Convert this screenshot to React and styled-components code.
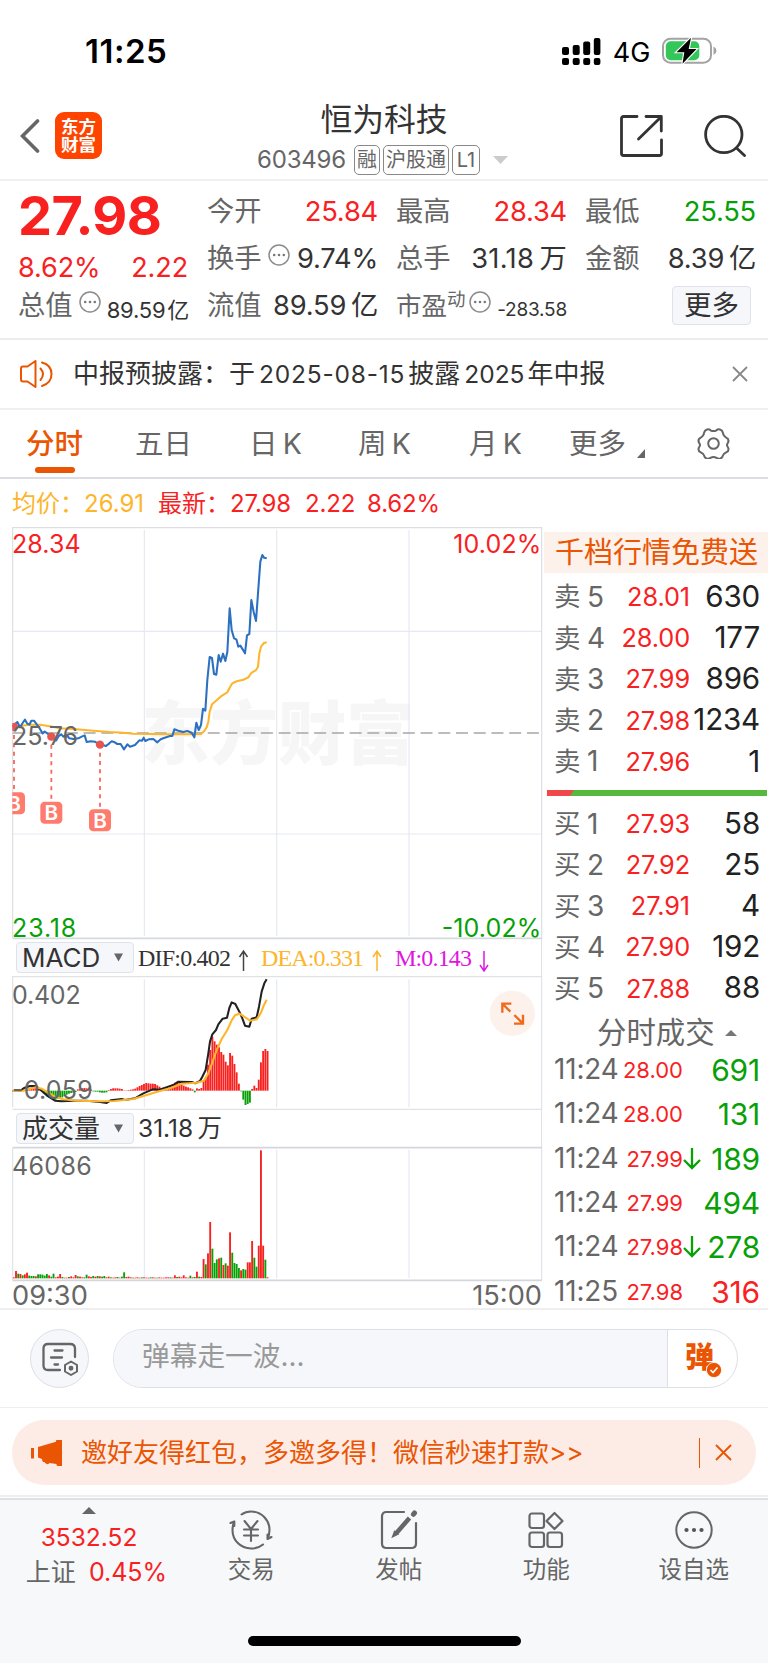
import React from 'react';
import styled, { createGlobalStyle } from 'styled-components';

const RED = '#f8211f';
const GREEN = '#07a007';
const ORANGE = '#ea5504';
const YELLOW = '#fdb52b';

const sells = [
  ['5', '28.01', '630'],
  ['4', '28.00', '177'],
  ['3', '27.99', '896'],
  ['2', '27.98', '1234'],
  ['1', '27.96', '1'],
];

const buys = [
  ['1', '27.93', '58'],
  ['2', '27.92', '25'],
  ['3', '27.91', '4'],
  ['4', '27.90', '192'],
  ['5', '27.88', '88'],
];

const trades = [
  { time: '11:24', price: '28.00', count: '691' },
  { time: '11:24', price: '28.00', count: '131' },
  { time: '11:24', price: '27.99', count: '189', down: true },
  { time: '11:24', price: '27.99', count: '494' },
  { time: '11:24', price: '27.98', count: '278', down: true },
  { time: '11:25', price: '27.98', count: '316', buy: true },
];

// one entry per minute, negative values are drawn in green
const macdBars = [
  1, 1, 1, 1, 2, 3, 5, 8, 10, 12, 10, 8, 5, -3, -9, -15, -20, -24, -27, -27, -24, -24, -20, -16, -12, -9, -7, -6,
  -4, 4, 6, 7, 8, 7, 5, 3, -2, -3, -3, -5, -6, -6, -5, 2, 5, 7, 7, 7, 6, 5, 1, 1, 2, 3, 4, 6, 10, 14, 17, 20, 23,
  22, 21, 21, 20, 16, 12, 8, 6, 6, 8, 14, 20, 24, 26, 24, 20, 15, 12, 10, 7, 4, -5, 7, 5, 8, 30, 40, 78, 122, 162,
  148, 138, 130, 116, 108, 87, 76, 113, 105, 80, 55, 21, -2, -27, -43, -40, -36, 5, 15, 8, 33, 85, 119, 125, 119,
];

// volume always grows upwards, the sign only picks the colour
const volumeBars = [
  3, 22, -14, 13, -9, 12, 17, -8, -7, -7, 6, -12, -12, -11, -8, -13, 9, -5, -14, 3, 5, 13, -4, 2, 2, -4, 6, 3, 10,
  -6, 5, 3, -3, -11, 6, 4, -7, 5, -7, 6, -5, -7, 3, 5, -3, 2, 3, -4, 2, -5, -18, 4, 5, 3, -2, 2, 3, 2, -3, 3, 2, 2,
  -3, 3, 2, -2, 3, 2, 2, 3, 3, -3, 2, 9, -4, 5, 3, 9, 3, 2, -8, 3, -4, 20, -5, 4, 58, -42, 75, 169, -89, -46, -57,
  60, -62, 40, -45, 38, 138, -77, -46, -43, -31, 24, -28, -26, 48, 48, 112, -62, -35, 98, 384, 98, -56, 3,
];

const priceLine =
  '38,620 45,612 52,606 60,622 68,609 75,599 82,611 88,614 94,602 102,602 108,610 118,624 128,640 134,635 142,640 150,648 160,655 168,662 176,648 184,643 190,650 200,645 208,655 220,657 235,655 245,650 254,646 260,666 272,664 285,665 295,672 308,675 318,678 328,670 335,664 344,667 352,672 362,672 372,688 382,673 390,680 405,675 418,661 426,662 431,653 436,663 446,658 460,657 472,667 482,658 492,654 510,648 517,648 523,628 535,632 550,636 562,633 575,638 583,652 589,608 596,630 603,615 609,566 616,572 622,480 629,411 636,414 642,462 649,464 656,405 662,425 669,401 676,423 682,396 689,265 695,330 702,355 709,358 715,380 721,377 728,388 735,400 741,346 748,342 754,240 761,276 768,303 774,220 781,125 787,105 792,113 800,115';

const avgLine =
  '38,624 60,618 90,614 120,614 150,619 180,625 230,628 280,632 330,636 370,638 400,641 450,642 500,643 560,643 603,642 612,634 620,622 625,605 629,575 636,553 650,541 664,528 682,517 689,503 697,490 710,484 730,479 745,472 754,459 768,450 774,440 778,400 783,380 792,369 800,367';

const difLine =
  '38,483 62,482 72,474 90,468 108,468 122,480 140,496 165,512 185,514 220,512 260,512 300,516 320,519 332,511 365,507 375,510 405,505 430,490 458,478 478,479 500,472 520,465 535,455 575,456 585,460 600,453 607,440 617,420 625,370 630,335 637,313 648,300 655,283 668,266 681,263 688,234 695,217 706,222 718,245 727,265 735,287 748,290 755,266 770,262 777,230 785,185 793,160 800,148';

const deaLine =
  '38,483 70,482 90,476 108,472 125,476 145,488 165,500 190,508 230,512 300,514 345,513 400,507 440,495 480,483 510,475 545,461 590,458 612,452 625,430 636,400 650,360 665,327 682,300 695,271 705,256 718,251 730,258 750,272 770,268 782,250 792,225 800,209';

const Bars = ({ data, base, upward }) =>
  data.map((v, i) => (
    <rect
      key={i}
      x={38.6 + i * 6.62}
      y={v > 0 || upward ? base - Math.abs(v) : base}
      width={5.6}
      height={Math.abs(v)}
      fill={v > 0 ? RED : GREEN}
    />
  ));

const Dots = () => (
  <DotsIcon viewBox="0 0 22 22">
    <circle cx="11" cy="11" r="10" fill="none" stroke="#8c8c8c" strokeWidth="1.500" />
    <circle cx="6.200" cy="11" r="1.300" fill="#777" />
    <circle cx="11" cy="11" r="1.300" fill="#777" />
    <circle cx="15.800" cy="11" r="1.300" fill="#777" />
  </DotsIcon>
);

const StatusBar = () => (
  <StyledStatus>
    <Clock>11:25</Clock>
    <StatusIcons>
      <svg width="39" height="27" viewBox="0 0 39 27">
        <rect x="0" y="9" width="7" height="8" rx="2" />
        <rect x="10.7" y="7" width="7" height="10" rx="2" />
        <rect x="21.2" y="3.5" width="7" height="13.5" rx="2" />
        <rect x="31.8" y="0" width="6.6" height="17" rx="2" />
        <rect x="0" y="20" width="7" height="7" rx="2" />
        <rect x="10.7" y="20" width="7" height="7" rx="2" />
        <rect x="21.2" y="20" width="7" height="7" rx="2" />
        <rect x="31.8" y="20" width="6.6" height="7" rx="2" />
      </svg>
      <Network>4G</Network>
      <svg width="55" height="28" viewBox="0 0 55 28">
        <rect x="1" y="1.7" width="48" height="24" rx="7.5" fill="none" stroke="#a3a3a3" strokeWidth="2" />
        <path d="M51.500 9.500q3 1.500 3 4.200t-3 4.200z" fill="#a3a3a3" />
        <rect x="3.800" y="4.300" width="33.500" height="19" rx="5" fill="#33c759" />
        <path d="M29 .8L14.500 15.200h7.800L20.500 26.800 34.500 12h-7.800z" fill="#000" stroke="#fff" strokeWidth="2.200" paintOrder="stroke" />
      </svg>
    </StatusIcons>
  </StyledStatus>
);

const Header = () => (
  <StyledHeader>
    <HeaderSide>
      <svg width="20" height="34" viewBox="0 0 20 34" fill="none" stroke="#666" strokeWidth="3.600" strokeLinecap="round">
        <path d="M17.500 2L2.500 17l15 15" />
      </svg>
      <Logo>
        <span>东方</span>
        <span>财富</span>
      </Logo>
    </HeaderSide>
    <HeaderTitle>
      <h1>恒为科技</h1>
      <div>
        <Code>603496</Code>
        <Tag $w={26}>融</Tag>
        <Tag $w={66}>沪股通</Tag>
        <Tag $w={28}>L1</Tag>
        <svg width="15" height="8" viewBox="0 0 15 8">
          <path d="M0 0h15L7.500 8z" fill="#ccc" />
        </svg>
      </div>
    </HeaderTitle>
    <HeaderActions>
      <svg width="43" height="42" viewBox="0 0 43 42" fill="none" stroke="#333" strokeWidth="2.800" strokeLinecap="round" strokeLinejoin="round">
        <path d="M17 1.500H3.500a2 2 0 00-2 2v35a2 2 0 002 2h36a2 2 0 002-2V25" />
        <path d="M26 1.500h15.300V16M41 2L18.500 24" />
      </svg>
      <svg width="43" height="42" viewBox="0 0 43 42" fill="none" stroke="#333" strokeWidth="2.800" strokeLinecap="round">
        <circle cx="19.800" cy="19.500" r="18.200" />
        <path d="M32.500 33l8 7.500" />
      </svg>
    </HeaderActions>
  </StyledHeader>
);

const Quote = () => (
  <StyledQuote>
    <QuoteMain>
      <BigPrice>27.98</BigPrice>
      <ChangeRow>
        <span>8.62%</span>
        <span>2.22</span>
      </ChangeRow>
      <QuoteCell>
        <label>总值</label>
        <Dots />
        <Value $small>89.59&#8202;亿</Value>
      </QuoteCell>
    </QuoteMain>
    <QuoteColumn>
      <QuoteCell>
        <label>今开</label>
        <Value $color={RED}>25.84</Value>
      </QuoteCell>
      <QuoteCell>
        <label>换手</label>
        <Dots />
        <Value>9.74%</Value>
      </QuoteCell>
      <QuoteCell>
        <label>流值</label>
        <Value>89.59&#8201;亿</Value>
      </QuoteCell>
    </QuoteColumn>
    <QuoteColumn>
      <QuoteCell>
        <label>最高</label>
        <Value $color={RED}>28.34</Value>
      </QuoteCell>
      <QuoteCell>
        <label>总手</label>
        <Value $spread={0.3}>31.18&#8201;万</Value>
      </QuoteCell>
      <QuoteCell $tight>
        <label>市盈</label>
        <sup>动</sup>
        <Dots />
        <Value $tiny>-283.58</Value>
      </QuoteCell>
    </QuoteColumn>
    <QuoteColumn>
      <QuoteCell>
        <label>最低</label>
        <Value $color={GREEN}>25.55</Value>
      </QuoteCell>
      <QuoteCell>
        <label>金额</label>
        <Value>8.39&#8201;亿</Value>
      </QuoteCell>
      <QuoteCell>
        <MoreButton>更多</MoreButton>
      </QuoteCell>
    </QuoteColumn>
  </StyledQuote>
);

const Notice = () => (
  <StyledNotice>
    <svg width="33" height="28" viewBox="0 0 33 28" fill="none" stroke={ORANGE} strokeWidth="2" strokeLinejoin="round" strokeLinecap="round">
      <path d="M1 8.500q0-2 2-2h4.500L15.500 1v26L7.500 21.500H3q-2 0-2-2z" />
      <path d="M20.500 8.500q5 5.500 0 11.500M22 2.500q9.500 2.500 9.500 11.500T22 26" />
    </svg>
    <p>
      中报预披露：于<Num $spread={0.8}>2025-08-15</Num>披露<Num>2025</Num>年中报
    </p>
    <svg width="16" height="16" viewBox="0 0 16 16" stroke="#888" strokeWidth="1.800">
      <path d="M1 1l14 14M15 1L1 15" />
    </svg>
  </StyledNotice>
);

const Tabs = () => (
  <StyledTabs>
    <Tab $w={58} $active>分时</Tab>
    <Tab $w={57} $gap={51}>五日</Tab>
    <Tab $w={51} $gap={57}>日&#8201;K</Tab>
    <Tab $w={51} $gap={58}>周&#8201;K</Tab>
    <Tab $w={51} $gap={60}>月&#8201;K</Tab>
    <Tab $w={76} $gap={49}>
      更多
      <svg width="8" height="9" viewBox="0 0 8 9">
        <path d="M8 0v9H0z" fill="#666" />
      </svg>
    </Tab>
    <svg width="33" height="31" viewBox="0 0 33 31" fill="none" stroke="#666" strokeWidth="2" strokeLinejoin="round">
      <path d="M10 1.500q2-.8 3.500.8 3 1.600 6 0 1.500-1.600 3.500-.8 2.500.8 3 3.500.3 3 3.200 4.600 2.500 1 2.300 3.400-.2 1.500-1 2.500-1 1.500 0 3 .8 1 1 2.500.2 2.400-2.300 3.400-2.900 1.600-3.200 3-.5 2.500-3 3.200-2 .8-3.500-.8-3-1.600-6 0-1.500 1.600-3.500.8-2.500-.7-3-3.200-.3-1.400-3.200-3-2.500-1-2.300-3.400.2-1.500 1-2.500 1-1.500 0-3-.8-1-1-2.500-.2-2.400 2.300-3.400Q6.700 8 7 5q.5-2.700 3-3.500z" />
      <circle cx="16.500" cy="15.500" r="5.300" />
    </svg>
  </StyledTabs>
);

const Marker = ({ x, y, badge }) => (
  <g>
    <circle cx={x} cy={y} r="12.500" fill="#e8554f" />
    <path d={`M${x} ${y + 24}V${badge - 4}`} stroke="#f8685e" strokeWidth="5.500" strokeDasharray="12 13" />
    <rect x={x - 33} y={badge} width="66" height="66" rx="13" fill="#ff7b6e" />
    <text x={x} y={badge + 55} fontSize="62" fontWeight="600" fill="#fff" textAnchor="middle">B</text>
  </g>
);

const PriceChart = () => (
  <ChartSvg viewBox="0 21 1626 1236" $h={412}>
    <defs>
      <clipPath id="plot">
        <rect x="37" y="0" width="1590" height="1300" />
      </clipPath>
    </defs>
    <g fontSize="208" fontWeight="900" fill="#f6f6f6">
      <text x="424" y="718" textLength="820" lengthAdjust="spacingAndGlyphs">东方财富</text>
    </g>
    <g stroke="#e6e9f1" strokeWidth="3.500" fill="none">
      <path d="M433 30V1248M830 30V1248M1227 30V1248M38 334H1625M38 942H1625" />
      <path d="M38 1255V23H1625V1257" stroke="#dcdee2" />
      <path d="M38 1255H1625" stroke="#d6d9de" strokeWidth="5" />
    </g>
    <path d="M38 639H1620" stroke="#a6a6a6" strokeWidth="5" strokeDasharray="36 17.200" />
    <polyline points={avgLine} fill="none" stroke={YELLOW} strokeWidth="6.200" />
    <polyline points={priceLine} fill="none" stroke="#2c70c0" strokeWidth="6.200" strokeLinejoin="round" />
    <g clipPath="url(#plot)">
      <Marker x={42} y={621} badge={817} />
      <Marker x={154} y={650} badge={845} />
      <Marker x={300} y={674} badge={868} />
    </g>
    <g fontSize="75">
      <text x="36" y="98" fill={RED} textLength="206">28.34</text>
      <text x="1360" y="98" fill={RED} textLength="264">10.02%</text>
      <text x="36" y="674" fill="#666" textLength="198">25.76</text>
      <text x="36" y="1250" fill={GREEN} textLength="193">23.18</text>
      <text x="1325" y="1250" fill={GREEN} textLength="299">-10.02%</text>
    </g>
  </ChartSvg>
);

const MacdChart = () => (
  <ChartSvg viewBox="0 138 1626 402" $h={134}>
    <g stroke="#e6e9f1" strokeWidth="3.500" fill="none">
      <path d="M433 148V532M830 148V532M1227 148V532" />
      <path d="M38 532V140H1625V540M38 538H1625" stroke="#e0e2e6" />
    </g>
    <Bars data={macdBars} base={482} />
    <polyline points={difLine} fill="none" stroke="#222" strokeWidth="6.200" strokeLinejoin="round" />
    <polyline points={deaLine} fill="none" stroke={YELLOW} strokeWidth="6.200" strokeLinejoin="round" />
    <g fontSize="75" fill="#666">
      <text x="36" y="223" textLength="206">0.402</text>
      <text x="36" y="506" textLength="242">-0.059</text>
    </g>
    <circle cx="1537" cy="250" r="68" fill="#fdf1eb" />
    <path d="M1531 245l-24-24M1507 248v-27h27M1543 255l26 26M1569 254v27h-27" stroke="#f06a1e" strokeWidth="7" fill="none" />
  </ChartSvg>
);

const VolumeChart = () => (
  <ChartSvg viewBox="0 651 1626 402" $h={134}>
    <g stroke="#e6e9f1" strokeWidth="3.500" fill="none">
      <path d="M433 660V1044M830 660V1044M1227 660V1044" />
      <path d="M38 1051V653M1625 651V1053" stroke="#e0e2e6" />
      <path d="M38 653H1625M38 1051H1625" stroke="#d4d6db" strokeWidth="5" />
    </g>
    <Bars data={volumeBars} base={1045} upward />
    <text x="36" y="736" fontSize="75" fill="#666" textLength="239">46086</text>
  </ChartSvg>
);

const Caret = () => (
  <svg width="9" height="9" viewBox="0 0 9 9">
    <path d="M0 .5h9l-4.500 8z" fill="#666" />
  </svg>
);

const Charts = () => (
  <ChartColumn>
    <PriceChart />
    <IndicatorRow>
      <Select>
        MACD
        <Caret />
      </Select>
      <MacdValues>
        <svg width="352" height="30" viewBox="0 0 352 30" fontSize="24">
          <text x="0" y="22.500" fill="#333" textLength="93">DIF:0.402</text>
          <path d="M105.500 28V9M101.500 14l4-6 4 6" stroke="#444" fill="none" strokeWidth="1.500" />
          <text x="123" y="22.500" fill={YELLOW} textLength="103">DEA:0.331</text>
          <path d="M239 28V9M235 14l4-6 4 6" stroke={YELLOW} fill="none" strokeWidth="1.500" />
          <text x="257" y="22.500" fill="#e016e0" textLength="77">M:0.143</text>
          <path d="M346 8v19M342 22l4 6 4-6" stroke="#e016e0" fill="none" strokeWidth="1.500" />
        </svg>
      </MacdValues>
    </IndicatorRow>
    <MacdChart />
    <IndicatorRow>
      <Select>
        成交量
        <Caret />
      </Select>
      <VolumeValue>31.18&#8201;万</VolumeValue>
    </IndicatorRow>
    <VolumeChart />
    <TimeAxis>
      <span>09:30</span>
      <span>15:00</span>
    </TimeAxis>
  </ChartColumn>
);

const OrderRow = ({ side, row }) => (
  <StyledOrder>
    <b>{side}</b>
    <i>{row[0]}</i>
    <OrderPrice>{row[1]}</OrderPrice>
    <OrderCount>{row[2]}</OrderCount>
  </StyledOrder>
);

const OrderBook = () => (
  <BookColumn>
    <Banner>千档行情免费送</Banner>
    {sells.map((row) => (
      <OrderRow key={row[0]} side="卖" row={row} />
    ))}
    <Ratio width="220" height="6" viewBox="0 0 220 6">
      <path d="M0 0h220v6H0z" fill="#56b83c" />
      <path d="M0 0h27l-4 6H0z" fill="#f04848" />
    </Ratio>
    {buys.map((row) => (
      <OrderRow key={row[0]} side="买" row={row} />
    ))}
    <TradeTitle>
      分时成交
      <svg width="12" height="6" viewBox="0 0 12 6">
        <path d="M6 0l6 6H0z" fill="#777" />
      </svg>
    </TradeTitle>
    {trades.map((t, i) => (
      <Trade key={i}>
        <TradeTime>{t.time}</TradeTime>
        <TradePrice>{t.price}</TradePrice>
        <TradeArrow>
          {t.down && (
            <svg width="18" height="22" viewBox="0 0 18 22" fill="none" stroke={GREEN} strokeWidth="2.300">
              <path d="M9 0v20M1 12l8 8 8-8" />
            </svg>
          )}
        </TradeArrow>
        <TradeCount $buy={t.buy}>{t.count}</TradeCount>
      </Trade>
    ))}
  </BookColumn>
);

const CommentBar = () => (
  <StyledComment>
    <RoundButton>
      <svg width="36" height="34" viewBox="0 0 36 34" fill="none" stroke="#666" strokeWidth="2.300" strokeLinecap="round" strokeLinejoin="round">
        <path d="M18 28H6q-4.500 0-4.500-4.500v-17Q1.500 2 6 2h22q5 0 5 4.500V15" />
        <path d="M12.500 8.500h8M9 15.500h11M12.500 22.500h3.500" />
        <path d="M29 19.500l6 3.500v6.500L29 33l-6-3.500V23z" strokeWidth="2" />
        <circle cx="29" cy="26.200" r="1.300" fill="#444" />
      </svg>
    </RoundButton>
    <InputBox>
      <Placeholder>弹幕走一波...</Placeholder>
      <DanmuButton>
        弹
        <svg width="16" height="16" viewBox="0 0 16 16">
          <circle cx="8" cy="8" r="7.600" fill={ORANGE} stroke="#fff" strokeWidth=".8" />
          <path d="M4.500 8l2.500 2.500 4.500-5" stroke="#fff" strokeWidth="1.600" fill="none" />
        </svg>
      </DanmuButton>
    </InputBox>
  </StyledComment>
);

const Promo = () => (
  <PromoWrap>
    <StyledPromo>
      <svg width="31" height="26" viewBox="0 0 31 26" fill={ORANGE}>
        <path d="M0 8h3v10.500H0zM7 7l18-5.200V.5q0-.5 1-.5h5v26h-4q-1.500 0-1.500-1.500V24l-7-1q-1 1.500-2.500 1-2-.5-2.500-2h-1.500q-1-1.500-1-3L7 17.500z" />
      </svg>
      <p>邀好友得红包，多邀多得！微信秒速打款&gt;&gt;</p>
      <PromoLine />
      <svg width="17" height="17" viewBox="0 0 17 17" stroke={ORANGE} strokeWidth="1.900">
        <path d="M1 1l15 15M16 1L1 16" />
      </svg>
    </StyledPromo>
  </PromoWrap>
);

const TabBar = () => (
  <StyledTabBar>
    <IndexItem>
      <svg width="14" height="7" viewBox="0 0 14 7">
        <path d="M7 0l7 7H0z" fill="#666" />
      </svg>
      <strong>3532.52</strong>
      <div>
        上证<em>0.45%</em>
      </div>
    </IndexItem>
    <NavItem>
      <svg width="44" height="40" viewBox="0 0 44 40" fill="none" stroke="#666" strokeWidth="2.100" strokeLinecap="round" strokeLinejoin="round">
        <path d="M12.500 4.500C16 2 19 1.500 22 1.500 32.500 1.500 40.500 9.700 40.500 20q0 4.500-2 9l4-2M38.500 29v-4.500" />
        <path d="M34 34.500c-3.500 3-8 4-12 4C11.500 38.500 3.500 30.300 3.500 20q0-4.500 1.800-8.500L1.500 13M5.300 11.500v4.500" />
        <path d="M15.500 11l6.500 8 6.500-8M22 19v12M15 19.500h14M15 25.500h14" />
      </svg>
      交易
    </NavItem>
    <NavItem>
      <svg width="38" height="40" viewBox="0 0 38 40" fill="none" stroke="#666" strokeWidth="2.200" strokeLinecap="round">
        <path d="M24 2H6.500Q2 2 2 6.500v27Q2 38 6.500 38h25q4.500 0 4.500-4.500V13" />
        <path d="M29.500 8L16 23.500" strokeWidth="4.500" strokeLinecap="butt" />
        <path d="M34.500 3l-1 1.300" strokeWidth="5" />
        <path d="M14.800 22l-1.500 4 4-2z" fill="#666" />
      </svg>
      发帖
    </NavItem>
    <NavItem>
      <svg width="36" height="40" viewBox="0 0 36 40" fill="none" stroke="#666" strokeWidth="2.200" strokeLinejoin="round">
        <rect x="1.500" y="3.500" width="14.500" height="14.500" rx="2.500" />
        <path d="M26.500 3l8 8-8 8-8-8z" />
        <rect x="1.500" y="22.500" width="14.500" height="14.500" rx="2.500" />
        <rect x="19.500" y="22.500" width="14.500" height="14.500" rx="2.500" />
      </svg>
      功能
    </NavItem>
    <NavItem>
      <svg width="38" height="40" viewBox="0 0 38 40" fill="#555">
        <circle cx="19" cy="20" r="17.700" fill="none" stroke="#666" strokeWidth="2" />
        <circle cx="11.500" cy="20" r="2.100" />
        <circle cx="19" cy="20" r="2.100" />
        <circle cx="26.500" cy="20" r="2.100" />
      </svg>
      设自选
    </NavItem>
    <HomeIndicator />
  </StyledTabBar>
);

const App = () => (
  <>
    <GlobalStyle />
    <Page>
      <StatusBar />
      <Header />
      <Quote />
      <Notice />
      <Tabs />
      <AverageRow>
        <Avg>均价：</Avg>
        <Avg $gap={14}>26.91</Avg>
        <span>最新：</span>
        <Latest $w={75}>27.98</Latest>
        <Latest $w={62}>2.22</Latest>
        <Latest>8.62%</Latest>
      </AverageRow>
      <Main>
        <Charts />
        <OrderBook />
      </Main>
      <CommentBar />
      <Promo />
      <TabBar />
    </Page>
  </>
);

export default App;

const GlobalStyle = createGlobalStyle`
  * {
    box-sizing: border-box;
  }
  body {
    margin: 0;
    background: #fff;
  }
  p, h1 {
    margin: 0;
    font-weight: 400;
  }
  svg {
    display: block;
    flex-shrink: 0;
  }
  b, i, em, strong {
    font-weight: 400;
    font-style: normal;
  }
`;

const Page = styled.div`
  width: 768px;
  height: 1663px;
  overflow: hidden;
  background: #fff;
  color: #333;
  font-family: Inter, 'Noto Sans CJK SC', sans-serif;
  font-size: 27px;
  line-height: 1;
  white-space: nowrap;
`;

const StyledStatus = styled.div`
  display: flex;
  justify-content: space-between;
  align-items: center;
  height: 102px;
  padding: 0 51px 0 85px;
  color: #000;
`;

const Clock = styled.div`
  font-size: 33px;
  font-weight: 600;
  letter-spacing: 0.5px;
  padding-top: 1px;
`;

const StatusIcons = styled.div`
  display: flex;
  align-items: center;
`;

const Network = styled.div`
  width: 61px;
  padding-top: 3px;
  text-align: center;
  font-size: 27px;
  font-weight: 400;
`;

const StyledHeader = styled.header`
  display: flex;
  justify-content: space-between;
  height: 79px;
  padding: 0 21px 0 20px;
  border-bottom: 2px solid #efefef;
`;

const HeaderSide = styled.div`
  display: flex;
  align-items: center;
  gap: 15px;
  width: 120px;
  height: 67px;
`;

const Logo = styled.div`
  display: flex;
  flex-direction: column;
  align-items: center;
  justify-content: center;
  gap: 1px;
  width: 47px;
  height: 47px;
  border-radius: 9px;
  background: #ff4400;
  color: #fff;
  font-size: 17.500px;
  font-weight: 700;
`;

const HeaderTitle = styled.div`
  display: flex;
  flex-direction: column;
  align-items: center;
  padding: 1px 0 0 8px;

  h1 {
    height: 40px;
    line-height: 34px;
    font-size: 31.800px;
    font-weight: 400;
  }

  div {
    display: flex;
    align-items: center;
    height: 40px;
    margin-left: -3px;
  }

  svg {
    margin-left: 10px;
  }
`;

const Code = styled.span`
  margin-right: 8px;
  font-size: 24px;
  color: #666;
  letter-spacing: -0.2px;
`;

const Tag = styled.span`
  display: flex;
  align-items: center;
  justify-content: center;
  width: ${({ $w }) => $w}px;
  height: 30px;
  margin-right: 3px;
  border: 1.500px solid #888;
  border-radius: 5px;
  color: #666;
  font-size: 20px;
`;

const HeaderActions = styled.div`
  display: flex;
  gap: 41px;
  padding-top: 13px;
`;

const StyledQuote = styled.section`
  display: grid;
  grid-template-columns: 170px 170px 170px 170px;
  column-gap: 19px;
  height: 159px;
  padding: 7px 0 0 18px;
  border-bottom: 2px solid #ececec;
`;

const QuoteMain = styled.div``;

const BigPrice = styled.div`
  height: 55px;
  line-height: 55px;
  color: ${RED};
  font-size: 54px;
  font-weight: 700;
  letter-spacing: -0.6px;
`;

const ChangeRow = styled.div`
  display: flex;
  justify-content: space-between;
  align-items: center;
  height: 39px;
  padding-top: 10px;
  color: ${RED};
  letter-spacing: -0.1px;
`;

const QuoteColumn = styled.div``;

const QuoteCell = styled.div`
  display: flex;
  align-items: center;
  height: 47px;

  label {
    width: ${({ $tight }) => ($tight ? 51 : 56)}px;
    color: #666;
    font-size: ${({ $tight }) => ($tight ? 25.500 : 27.300)}px;
  }

  sup {
    padding-bottom: 12px;
    font-size: 18.500px;
    color: #666;
    margin-right: -2px;
  }
`;

const DotsIcon = styled.svg`
  width: 22px;
  height: 22px;
  margin: 0 0 8px 5px;
`;

const Value = styled.span`
  margin: 0 -1px 0 auto;
  padding-top: ${({ $small, $tiny }) => ($small || $tiny ? 8 : 0)}px;
  color: ${({ $color }) => $color || '#333'};
  font-size: ${({ $small, $tiny }) => ($tiny ? 19 : $small ? 22 : 27.300)}px;
  letter-spacing: ${({ $spread }) => $spread || -0.2}px;
`;

const MoreButton = styled.button`
  width: 79px;
  height: 39px;
  margin: 0 4px 0 auto;
  padding: 0;
  border: 1.500px solid #dfe2e8;
  border-radius: 4px;
  background: #f5f7fa;
  color: #333;
  font: 27.500px/1 Inter, 'Noto Sans CJK SC', sans-serif;
`;

const StyledNotice = styled.section`
  display: flex;
  align-items: center;
  height: 70px;
  padding: 0 20px 1px 20px;
  border-bottom: 2px solid #efefef;

  p {
    flex: 1;
    padding-left: 20px;
    font-size: 26px;
  }
`;

const Num = styled.span`
  margin: 0 3px 0 4px;
  font-size: 24.500px;
  letter-spacing: ${({ $spread }) => $spread || 0}px;
`;

const StyledTabs = styled.nav`
  display: flex;
  height: 69px;
  padding: 0 38px 0 26px;
  border-bottom: 2px solid #dcdde2;

  > svg {
    margin: 18px 0 0 auto;
  }
`;

const Tab = styled.div`
  position: relative;
  display: flex;
  justify-content: space-between;
  width: ${({ $w }) => $w}px;
  margin-left: ${({ $gap }) => $gap || 0}px;
  height: 66px;
  line-height: 67px;
  color: ${({ $active }) => ($active ? ORANGE : '#666')};
  font-size: 28.500px;
  font-weight: ${({ $active }) => ($active ? 500 : 400)};

  svg {
    margin-top: 39px;
  }

  &::after {
    content: '';
    display: ${({ $active }) => ($active ? 'block' : 'none')};
    position: absolute;
    left: 9px;
    bottom: 3px;
    width: 40px;
    height: 6px;
    border-radius: 3px;
    background: ${ORANGE};
  }
`;

const AverageRow = styled.div`
  display: flex;
  align-items: center;
  height: 48px;
  padding: 2px 0 0 12px;
  font-size: 24px;
  color: ${RED};
`;

const Avg = styled.span`
  color: ${YELLOW};
  margin-right: ${({ $gap }) => $gap || 0}px;
`;

const Latest = styled.span`
  width: ${({ $w }) => ($w ? `${$w}px` : 'auto')};
  letter-spacing: -0.2px;
`;

const Main = styled.main`
  display: grid;
  grid-template-columns: 542px 1fr;
  height: 783px;
  border-bottom: 2px solid #efefef;
`;

const ChartColumn = styled.div``;

const ChartSvg = styled.svg`
  width: 542px;
  height: ${({ $h }) => $h}px;
  overflow: visible;
  font-family: Inter, 'Noto Sans CJK SC', sans-serif;
`;

const IndicatorRow = styled.div`
  display: flex;
  align-items: center;
  height: 37px;
  padding-left: 16px;
  border-right: 1px solid #e0e2e6;
`;

const Select = styled.div`
  display: flex;
  align-items: center;
  justify-content: space-between;
  width: 118px;
  height: 31px;
  margin-right: 4px;
  padding: 0 10px 0 5px;
  border: 1.500px solid #dfe2e8;
  border-radius: 4px;
  background: #f5f7fa;
  font-size: 26px;
`;

const MacdValues = styled.div`
  svg {
    font-family: 'Liberation Serif', serif;
  }
`;

const VolumeValue = styled.div`
  font-size: 24.500px;
`;

const TimeAxis = styled.div`
  display: flex;
  justify-content: space-between;
  height: 30px;
  padding-left: 12px;
  line-height: 30px;
  color: #666;
  font-size: 27.200px;
`;

const BookColumn = styled.aside`
  padding: 5px 0 0 2px;
`;

const Banner = styled.div`
  height: 41px;
  margin-bottom: 3px;
  padding-left: 11px;
  line-height: 41px;
  background: #fdf1eb;
  color: ${ORANGE};
  font-size: 29px;
`;

const StyledOrder = styled.div`
  display: flex;
  align-items: center;
  height: 41.200px;
  padding: 0 8px 0 10px;
  color: #666;

  b {
    width: 33px;
    font-size: 26.500px;
  }

  i {
    width: 21px;
    font-size: 28px;
  }
`;

const OrderPrice = styled.span`
  width: 82px;
  text-align: right;
  color: ${RED};
  font-size: 25.300px;
  letter-spacing: -0.1px;
`;

const OrderCount = styled.span`
  flex: 1;
  display: flex;
  justify-content: flex-end;
  color: #222;
  font-size: 29.600px;
  letter-spacing: -0.2px;
`;

const Ratio = styled.svg`
  margin: 8px 0 7px 3px;
`;

const TradeTitle = styled.div`
  display: flex;
  align-items: center;
  gap: 10px;
  height: 39px;
  padding: 9px 0 0 53px;
  color: #666;
  font-size: 29.400px;
`;

const Trade = styled.div`
  display: flex;
  align-items: center;
  height: 44.300px;
  padding: 0 8px 0 10px;
`;

const TradeTime = styled.span`
  width: 68px;
  color: #666;
  font-size: 27.800px;
  letter-spacing: -0.1px;
`;

const TradePrice = styled.span`
  width: 61px;
  text-align: right;
  color: ${RED};
  font-size: 22px;
`;

const TradeArrow = styled.span`
  width: 18px;
`;

const TradeCount = styled.span`
  flex: 1;
  text-align: right;
  color: ${({ $buy }) => ($buy ? RED : GREEN)};
  font-size: 30px;
  letter-spacing: -0.2px;
`;

const StyledComment = styled.div`
  display: flex;
  align-items: center;
  gap: 24px;
  height: 98px;
  padding: 0 30px;
  border-bottom: 1px solid #efefef;
`;

const RoundButton = styled.div`
  display: flex;
  align-items: center;
  justify-content: center;
  width: 59px;
  height: 59px;
  border: 1.500px solid #dcdfe6;
  border-radius: 50%;
  background: #f5f7fa;
`;

const InputBox = styled.div`
  display: flex;
  flex: 1;
  height: 59px;
  border: 1.500px solid #dcdfe6;
  border-radius: 30px;
  overflow: hidden;
`;

const Placeholder = styled.div`
  flex: 1;
  padding-left: 28px;
  line-height: 53px;
  background: #f5f7fa;
  color: #999;
  font-size: 27.700px;
`;

const DanmuButton = styled.div`
  position: relative;
  width: 70px;
  padding-left: 17px;
  border-left: 1.500px solid #dcdfe6;
  line-height: 55px;
  color: ${ORANGE};
  font-size: 29px;
  font-weight: 900;

  svg {
    position: absolute;
    left: 38px;
    top: 32px;
  }
`;

const PromoWrap = styled.div`
  height: 89px;
  margin-bottom: 1px;
  padding: 12px 12px 0;
  border-bottom: 2px solid #efefef;
`;

const StyledPromo = styled.div`
  display: flex;
  align-items: center;
  height: 65px;
  padding: 0 24px 0 19px;
  border-radius: 32px;
  background: #fdece5;
  color: ${ORANGE};

  p {
    flex: 1;
    padding-left: 19px;
    font-size: 26px;
  }
`;

const PromoLine = styled.div`
  width: 1.500px;
  height: 30px;
  margin-right: 15px;
  background: ${ORANGE};
`;

const StyledTabBar = styled.footer`
  display: grid;
  grid-template-columns: 178px repeat(4, 147.500px);
  grid-template-rows: 136px 27px;
  height: 165px;
  border-top: 2px solid #dfe1e4;
  background: #f7f8fa;
`;

const IndexItem = styled.div`
  display: flex;
  flex-direction: column;
  align-items: center;
  padding-top: 7px;

  strong {
    height: 46px;
    line-height: 46px;
    color: ${RED};
    font-size: 24.500px;
  }

  div {
    display: flex;
    gap: 13px;
    height: 26px;
    padding-left: 15px;
    color: #666;
    line-height: 24px;
    font-size: 25px;
  }

  em {
    color: ${RED};
  }
`;

const NavItem = styled.div`
  display: flex;
  flex-direction: column;
  align-items: center;
  gap: 8px;
  padding: 10px 1px 0 0;
  color: #666;
  font-size: 23.500px;
`;

const HomeIndicator = styled.div`
  grid-column: 1 / -1;
  justify-self: center;
  width: 273px;
  height: 10px;
  border-radius: 5px;
  background: #000;
`;
